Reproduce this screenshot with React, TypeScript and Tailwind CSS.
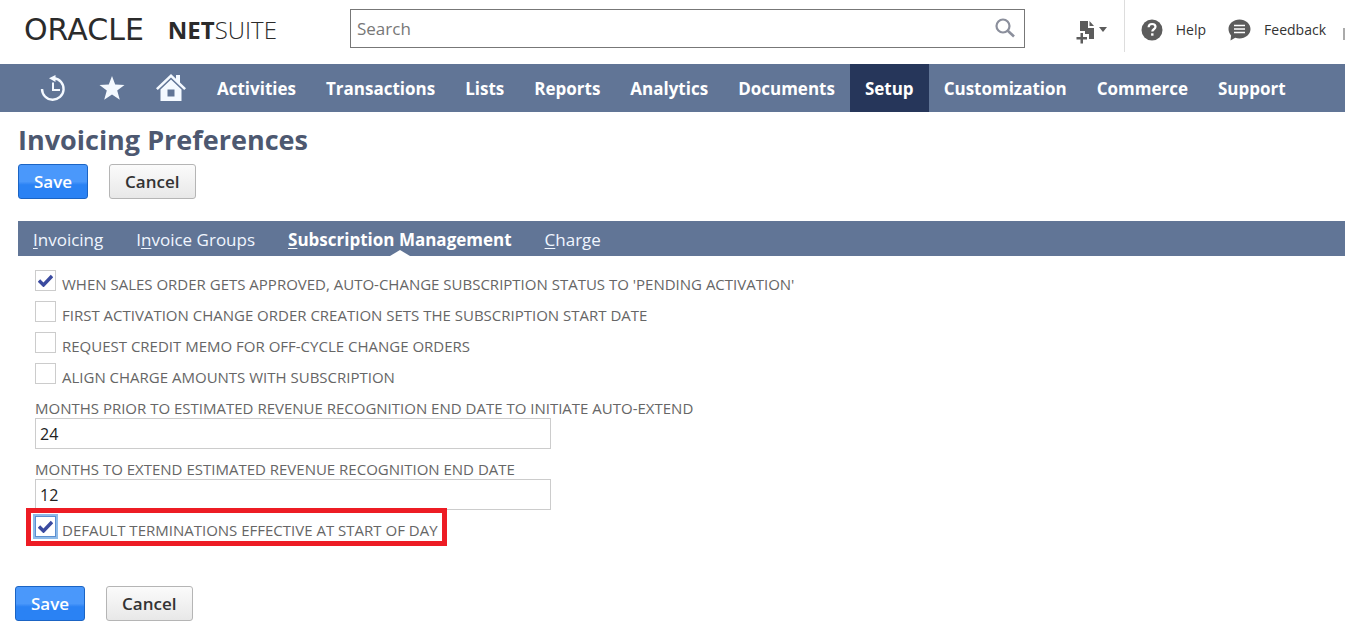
import { useState } from "react";

const menu = [
  "Activities",
  "Transactions",
  "Lists",
  "Reports",
  "Analytics",
  "Documents",
  "Setup",
  "Customization",
  "Commerce",
  "Support",
];

// key is the index of the underlined access key
const tabs = [
  { label: "Invoicing", key: 0 },
  { label: "Invoice Groups", key: 1 },
  { label: "Subscription Management", key: 0 },
  { label: "Charge", key: 0 },
];

function Logo() {
  return (
    <a href="#" aria-label="Oracle NetSuite" className="mb-1 flex w-[326px] shrink items-center gap-6 whitespace-nowrap text-[#2b2b2b]">
      <span className="font-['DejaVu_Sans'] text-[30px] leading-8">ORACLE</span>
      <span className="text-2xl font-light leading-8">
        <b className="font-bold">NET</b>SUITE
      </span>
    </a>
  );
}

function Header() {
  return (
    <header className="flex h-16 items-center overflow-hidden pl-6">
      <Logo />
      <div className="mb-2 flex h-[39px] min-w-40 flex-1 items-center border border-[#777] bg-white pr-2">
        <input
          type="text"
          aria-label="Search"
          placeholder="Search"
          className="h-full min-w-0 flex-1 px-[6px] text-[17px] text-[#333] outline-none placeholder:text-[#777]"
        />
        <button type="button" aria-label="Submit search">
          <svg width="22" height="22" viewBox="0 0 22 22" fill="none" stroke="#8b8f9c" strokeWidth="2.200">
            <circle cx="9" cy="9" r="6.5" />
            <path d="M13.500 13.500L20 19.500" strokeWidth="2.600" />
          </svg>
        </button>
      </div>
      <div className="flex h-full shrink-0 items-center pb-1 text-sm font-medium text-[#333]">
        <button type="button" aria-label="Create new" className="ml-[50px] mr-4 pt-1">
          <svg width="33" height="24" viewBox="0 0 33 24" fill="#5c5c5c">
            <path d="M5 1h8v7h6v11h-5v-5h-4v-3H5z" />
            <path d="M14.500 1L19 6h-4.500z" />
            <path d="M5.500 13h2.500v4h4v2.500H8v4H5.500v-4h-4V17h4z" />
            <path d="M24 7h8l-4 5z" />
          </svg>
        </button>
        <div className="mb-2 h-[52px] w-px bg-[#ddd]" />
        <a href="#" className="ml-4 flex items-center gap-[13px]">
          <svg width="22" height="22" viewBox="0 0 22 22">
            <circle cx="11" cy="11" r="10.500" fill="#5c5c5c" />
            <path d="M7.600 8.300C7.700 6 9.200 5 11.100 5c2 0 3.400 1.100 3.400 2.800 0 2.500-3.200 2.400-3.200 4.700" fill="none" stroke="#fff" strokeWidth="2.200" />
            <rect x="10.100" y="14.300" width="2.400" height="2.400" fill="#fff" />
          </svg>
          Help
        </a>
        <a href="#" className="ml-[22px] flex items-center gap-[13px]">
          <svg width="23" height="22" viewBox="0 0 23 22">
            <path d="M11.500.5C17.600.500 22.500 4.800 22.500 10s-4.900 9.500-11 9.500c-1.500 0-3-.300-4.300-.700L2.500 21.500l.600-5C1.500 14.800.5 12.500.5 10 .500 4.800 5.400.500 11.500.500z" fill="#5c5c5c" />
            <path d="M6 6.500h11M6 10h11M6 13.500h11" stroke="#fff" strokeWidth="1.600" />
          </svg>
          Feedback
        </a>
        <div className="ml-[17px] mt-2 h-3 w-[2px] bg-[#aaa]" />
      </div>
    </header>
  );
}

function MainMenu() {
  return (
    <nav className="flex h-12 items-stretch overflow-hidden whitespace-nowrap bg-[#617596] pl-10 text-[17px] font-bold text-white">
      <div className="flex items-center gap-[31px] pr-4">
        <a href="#" aria-label="Recent records">
          <svg width="28" height="28" viewBox="0 0 28 28" fill="none" stroke="#f4f9ff" strokeWidth="2.400">
            <path d="M12 4.200H14A10.800 10.800 0 1 1 2 15" />
            <path d="M13 8.500V16h7" strokeWidth="2" />
            <path d="M9 4.300L15.500 1v7z" fill="#f4f9ff" stroke="none" />
          </svg>
        </a>
        <a href="#" aria-label="Shortcuts">
          <svg width="26" height="26" viewBox="0 0 26 26" fill="#f4f9ff">
            <path d="M13 1l3.200 8.600 9.300.300-7.300 5.700 2.600 9.200L13 19.600l-7.800 5.200 2.600-9.200L.5 9.900l9.300-.300z" />
          </svg>
        </a>
        <a href="#" aria-label="Home">
          <svg width="30" height="28" viewBox="0 0 30 28" fill="#f4f9ff">
            <path d="M15 0l5 4.700V1h4v7.500l6 5.800-1.800 1.700L15 3.500 1.800 16 0 14.300z" />
            <path fillRule="evenodd" d="M15 5.500l10.500 10V27h-21V15.500zM11.500 15.500v7h7v-7z" />
          </svg>
        </a>
      </div>
      {menu.map((item) => (
        <a
          key={item}
          href="#"
          className={`flex items-center px-[15px] pt-0.5 ${item === "Setup" ? "bg-[#26365a]" : ""}`}
        >
          {item}
        </a>
      ))}
    </nav>
  );
}

function Actions() {
  return (
    <div className="flex gap-[21px]">
      <button
        type="button"
        className="h-[35px] rounded-[3px] border border-[#1b64c4] bg-linear-to-b from-[#4a98fb] from-50% to-[#2a82f4] to-60% px-[15px] text-[17px] font-semibold text-white"
      >
        Save
      </button>
      <button
        type="button"
        className="h-[35px] rounded-[3px] border border-[#b5b5b5] bg-linear-to-b from-[#fbfbfb] to-[#e8e8e8] px-[15px] text-[17px] font-semibold text-[#333]"
      >
        Cancel
      </button>
    </div>
  );
}

function TabBar() {
  const [active, setActive] = useState("Subscription Management");

  return (
    <div role="tablist" className="ml-[18px] flex h-[35px] gap-[33px] overflow-hidden whitespace-nowrap bg-[#617596] pl-[15px] text-[17px] text-[#f0f6ff]">
      {tabs.map(({ label, key }) => (
        <button
          key={label}
          type="button"
          role="tab"
          aria-selected={active === label}
          onClick={() => setActive(label)}
          className={`relative pt-0.5 ${active === label ? "font-bold text-white" : ""}`}
        >
          {label.slice(0, key)}
          <span className="underline underline-offset-2">{label[key]}</span>
          {label.slice(key + 1)}
          {active === label && (
            <svg className="absolute bottom-0 left-1/2 -translate-x-1/2" width="20" height="6" viewBox="0 0 20 6">
              <path d="M0 6L10 0l10 6z" fill="#fff" />
            </svg>
          )}
        </button>
      ))}
    </div>
  );
}

function CheckRow({ label, checked = false, focused = false }: { label: string; checked?: boolean; focused?: boolean }) {
  return (
    <label className="flex h-[31px] items-start gap-[6px] text-[#666]">
      <span className="grid shrink-0">
        <input
          type="checkbox"
          defaultChecked={checked}
          className={`peer col-start-1 row-start-1 size-[21px] appearance-none border bg-white ${
            focused ? "border-[#5b8fd0] ring-2 ring-[#8fbbe8]" : "border-[#ccc]"
          }`}
        />
        <svg
          className="pointer-events-none invisible col-start-1 row-start-1 m-auto peer-checked:visible"
          width="15"
          height="13"
          viewBox="0 0 15 13"
        >
          <path d="M1 6.500L5.500 11 14 2" fill="none" stroke="#3b4ba0" strokeWidth="3.400" />
        </svg>
      </span>
      <span className="pt-1">{label}</span>
    </label>
  );
}

function TextField({ id, label, value }: { id: string; label: string; value: string }) {
  return (
    <div className="flex flex-col">
      <label htmlFor={id} className="text-[#666]">
        {label}
      </label>
      <input
        id={id}
        type="text"
        defaultValue={value}
        className="h-[31px] w-full max-w-[516px] border border-[#ccc] bg-white px-1 text-base text-[#222]"
      />
    </div>
  );
}

export default function App() {
  return (
    <div className="min-h-screen bg-white font-['Open_Sans',sans-serif]">
      <Header />
      <MainMenu />
      <main>
        <div className="px-[18px] pt-2">
          <h1 className="text-[27px] font-bold leading-10 text-[#4d5870]">Invoicing Preferences</h1>
          <div className="pt-1 pb-[22px]">
            <Actions />
          </div>
        </div>
        <TabBar />
        <form className="px-[35px] pt-[14px] text-[15px] leading-5">
          <CheckRow label="WHEN SALES ORDER GETS APPROVED, AUTO-CHANGE SUBSCRIPTION STATUS TO 'PENDING ACTIVATION'" checked />
          <CheckRow label="FIRST ACTIVATION CHANGE ORDER CREATION SETS THE SUBSCRIPTION START DATE" />
          <CheckRow label="REQUEST CREDIT MEMO FOR OFF-CYCLE CHANGE ORDERS" />
          <CheckRow label="ALIGN CHARGE AMOUNTS WITH SUBSCRIPTION" />
          <div className="flex flex-col gap-[10px] pt-1">
            <TextField
              id="months-prior"
              label="MONTHS PRIOR TO ESTIMATED REVENUE RECOGNITION END DATE TO INITIATE AUTO-EXTEND"
              value="24"
            />
            <TextField id="months-extend" label="MONTHS TO EXTEND ESTIMATED REVENUE RECOGNITION END DATE" value="12" />
          </div>
          <div className="relative -ml-[9px] -mt-[2px] h-[38px] w-fit border-5 border-[#ed1c24] px-1 pt-[3px]">
            <CheckRow label="DEFAULT TERMINATIONS EFFECTIVE AT START OF DAY" checked focused />
          </div>
        </form>
        <div className="px-[15px] pt-10 pb-3">
          <Actions />
        </div>
      </main>
    </div>
  );
}
